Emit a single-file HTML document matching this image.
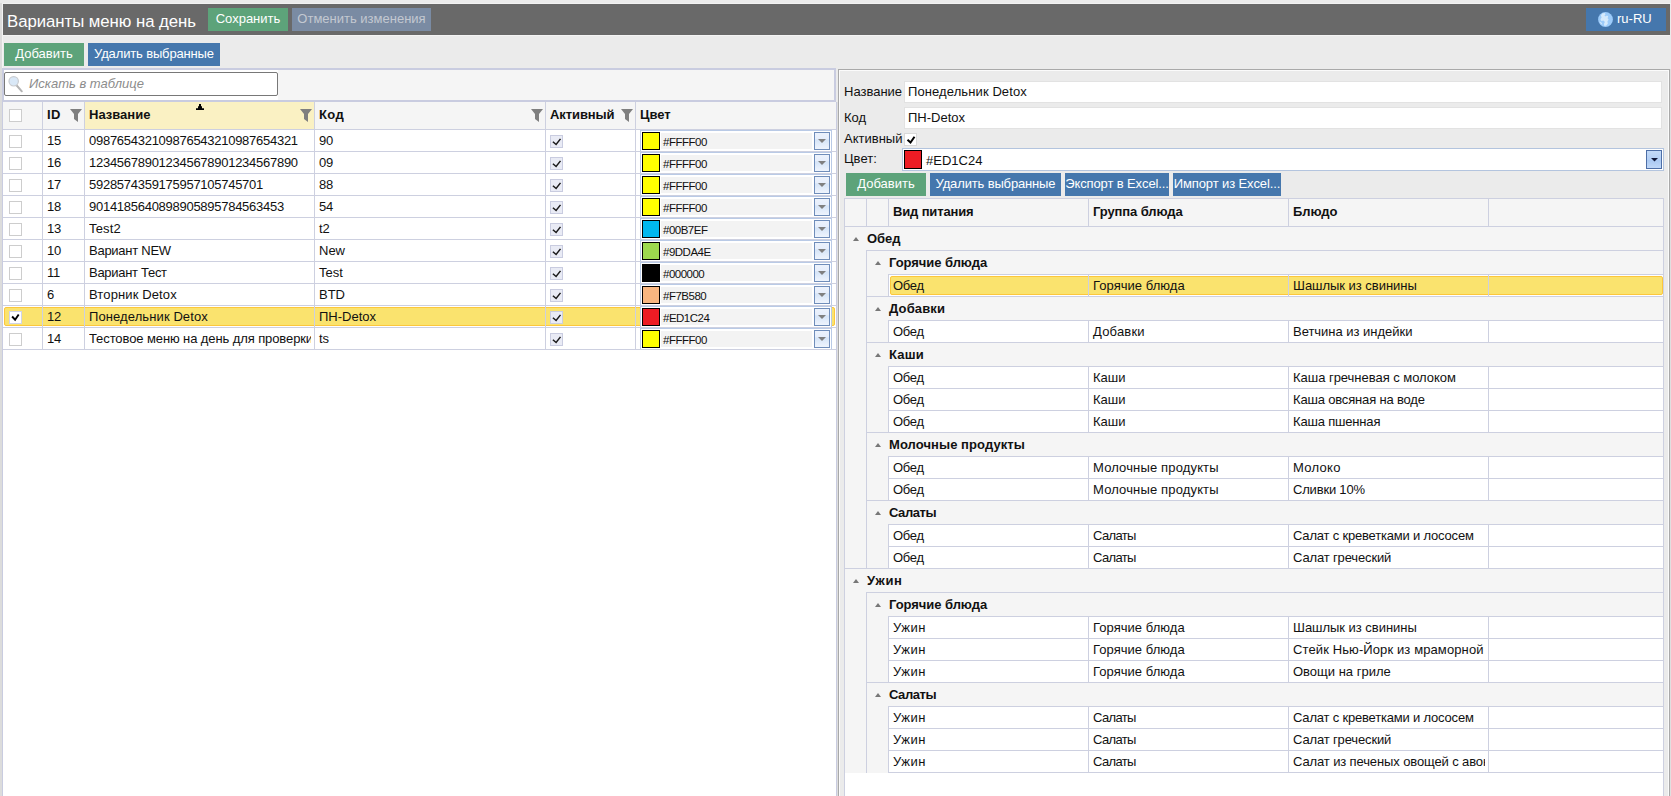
<!DOCTYPE html><html lang="ru"><head><meta charset="utf-8"><title>Варианты меню на день</title><style>
html,body{margin:0;padding:0}
body{width:1671px;height:796px;overflow:hidden;background:#ebebeb;position:relative;font-family:"Liberation Sans", sans-serif;font-size:13px;color:#111}
div{position:absolute;box-sizing:border-box}
.t{white-space:nowrap;line-height:20px;height:20px}
.b{font-weight:bold}
.btn{color:#fff;text-align:center;line-height:22px;white-space:nowrap}
.g{background:#5da37a}
.bl{background:#4577ad}
.cb{width:13px;height:13px;background:#fff;border:1px solid #cdcdcd}
.cba{width:13px;height:13px;background:#e9ebf5;border:1px solid #c9cce0}
.hl{height:1px;background:#cdd0e0}
.vl{width:1px;background:#cdd0e0}
.sw{width:18px;height:18px;border:1px solid #000}
.cmb{background:#f3f3f3}
.dd{width:16px;height:18px;border:1px solid #6f8dba;background:linear-gradient(#ecf2fc 0%,#e6eefb 40%,#d5e4f7 41%,#eef4fd 100%)}
svg{position:absolute;overflow:visible}
</style></head><body>
<div style="left:0px;top:3px;width:2px;height:793px;background:#dcdcdc"></div>
<div style="left:2px;top:3px;width:1px;height:793px;background:#f3f3f3"></div>
<div style="left:2px;top:3px;width:1669px;height:1px;background:#f2f2f2"></div>
<div style="left:3px;top:4px;width:1667px;height:31px;background:#696969"></div>
<div style="left:3px;top:35px;width:1667px;height:1px;background:#f4f4f4"></div>
<div class="t" style="left:7px;top:10px;font-size:16.8px;color:#fff;line-height:24px;height:24px;letter-spacing:-0.05px">Варианты меню на день</div>
<div class="btn g" style="left:208px;top:8px;width:80px;height:23px;">Сохранить</div>
<div class="btn" style="left:292px;top:8px;width:139px;height:23px;background:#7a8ba3;color:#c3c8d1">Отменить изменения</div>
<div class="btn bl" style="left:1586px;top:8px;width:80px;height:23px;"></div>
<svg style="left:1598px;top:12px" width="15" height="15" viewBox="0 0 15 15"><circle cx="7.5" cy="7.5" r="7.4" fill="#9ccbfa"/><path d="M4.2 1.6 L6.6 0.9 L7.6 2.2 L6.4 3.6 L7.8 4.6 L8.9 3.4 L10.2 4.2 L9.6 6.2 L10.6 7.6 L9.4 9.6 L9.9 11.6 L8.4 13.4 L6.4 13.9 L5.9 11.9 L6.9 9.9 L5.4 8.6 L3.4 8.9 L2.4 7.2 L3.6 5.4 L2.9 3.6 Z M1.6 9.4 L3.4 10.4 L4.4 12.6 L2.9 11.9 Z" fill="#d6eafc"/></svg>
<div class="t" style="left:1617px;top:9px;color:#fff">ru-RU</div>
<div class="btn g" style="left:4px;top:43px;width:80px;height:23px;">Добавить</div>
<div class="btn bl" style="left:88px;top:43px;width:132px;height:23px;letter-spacing:-0.15px">Удалить выбранные</div>
<div style="left:2px;top:68px;width:834px;height:34px;border:2px solid #c9cce0;background:#f5f5f5"></div>
<div style="left:4px;top:70px;width:274px;height:30px;background:#fff"></div>
<div style="left:4px;top:72px;width:274px;height:24px;border:1px solid #787878;border-radius:2px;background:#fff"></div>
<svg style="left:7px;top:75px" width="17" height="18" viewBox="0 0 17 18"><line x1="9.3" y1="10" x2="14.8" y2="16.3" stroke="#b4b4b4" stroke-width="2" stroke-linecap="round"/><circle cx="6.7" cy="6.3" r="4.7" fill="#d9e8f7" stroke="#c9ccd0" stroke-width="1.2"/></svg>
<div class="t" style="left:29px;top:74px;font-style:italic;color:#8c8c8c">Искать в таблице</div>
<div style="left:2px;top:102px;width:835px;height:694px;background:#fff;border-left:1px solid #c9cce0;border-right:1px solid #c9cce0"></div>
<div style="left:3px;top:102px;width:833px;height:27px;background:#f5f5f5"></div>
<div style="left:85px;top:102px;width:229px;height:27px;background:#faf1c3"></div>
<div class="cb" style="left:9px;top:109px;width:13px;height:13px;"></div>
<div class="t b" style="left:47px;top:105px;letter-spacing:0.3px;">ID</div>
<svg style="left:70px;top:109px" width="12" height="13"><polygon points="0,0 12,0 8,5 8,13 4,10 4,5" fill="#7f7f7f"/></svg>
<div class="t b" style="left:89px;top:105px;letter-spacing:0.0px;">Название</div>
<svg style="left:196px;top:104px" width="8" height="6"><polygon points="0,6 8,6 8,4.3 6,4.3 6,2.3 5,2.3 5,0 3,0 3,2.3 2,2.3 2,4.3 0,4.3" fill="#000"/></svg>
<svg style="left:300px;top:109px" width="12" height="13"><polygon points="0,0 12,0 8,5 8,13 4,10 4,5" fill="#7f7f7f"/></svg>
<div class="t b" style="left:319px;top:105px;letter-spacing:0.44px;">Код</div>
<svg style="left:531px;top:109px" width="12" height="13"><polygon points="0,0 12,0 8,5 8,13 4,10 4,5" fill="#7f7f7f"/></svg>
<div class="t b" style="left:550px;top:105px;letter-spacing:-0.09px;">Активный</div>
<svg style="left:621px;top:109px" width="12" height="13"><polygon points="0,0 12,0 8,5 8,13 4,10 4,5" fill="#7f7f7f"/></svg>
<div class="t b" style="left:640px;top:105px;letter-spacing:-0.01px;">Цвет</div>
<div class="cb" style="left:9px;top:135px;width:13px;height:13px;"></div>
<div class="t" style="left:47px;top:131px;letter-spacing:-0.27px">15</div>
<div class="t" style="left:89px;top:131px;letter-spacing:-0.27px;width:222px;overflow:hidden">098765432109876543210987654321</div>
<div class="t" style="left:319px;top:131px;letter-spacing:-0.27px">90</div>
<div class="cba" style="left:550px;top:135px;width:13px;height:13px;"><svg style="left:0;top:0" width="11" height="11" viewBox="0 0 11 11"><path d="M1.9 5.7 L5.1 8.5 L9.5 2.9" fill="none" stroke="#1a1a1a" stroke-width="1.5"/></svg></div>
<div style="left:640px;top:130px;width:192px;height:22px;border:1px solid #b9cae6;background:#fff"></div>
<div class="cmb" style="left:661px;top:133px;width:151px;height:16px;"></div>
<div class="sw" style="left:642px;top:132px;width:18px;height:18px;background:#FFFF00"></div>
<div class="t" style="left:663px;top:132px;font-size:11.5px;letter-spacing:-0.5px">#FFFF00</div>
<div class="dd" style="left:814px;top:132px;width:16px;height:18px;"><svg style="left:3px;top:6px" width="8" height="4"><polygon points="0,0 8,0 4,4" fill="#808080"/></svg></div>
<div class="hl" style="left:3px;top:151px;width:833px;height:1px;"></div>
<div class="cb" style="left:9px;top:157px;width:13px;height:13px;"></div>
<div class="t" style="left:47px;top:153px;letter-spacing:-0.27px">16</div>
<div class="t" style="left:89px;top:153px;letter-spacing:-0.27px;width:222px;overflow:hidden">123456789012345678901234567890</div>
<div class="t" style="left:319px;top:153px;letter-spacing:-0.27px">09</div>
<div class="cba" style="left:550px;top:157px;width:13px;height:13px;"><svg style="left:0;top:0" width="11" height="11" viewBox="0 0 11 11"><path d="M1.9 5.7 L5.1 8.5 L9.5 2.9" fill="none" stroke="#1a1a1a" stroke-width="1.5"/></svg></div>
<div style="left:640px;top:152px;width:192px;height:22px;border:1px solid #b9cae6;background:#fff"></div>
<div class="cmb" style="left:661px;top:155px;width:151px;height:16px;"></div>
<div class="sw" style="left:642px;top:154px;width:18px;height:18px;background:#FFFF00"></div>
<div class="t" style="left:663px;top:154px;font-size:11.5px;letter-spacing:-0.5px">#FFFF00</div>
<div class="dd" style="left:814px;top:154px;width:16px;height:18px;"><svg style="left:3px;top:6px" width="8" height="4"><polygon points="0,0 8,0 4,4" fill="#808080"/></svg></div>
<div class="hl" style="left:3px;top:173px;width:833px;height:1px;"></div>
<div class="cb" style="left:9px;top:179px;width:13px;height:13px;"></div>
<div class="t" style="left:47px;top:175px;letter-spacing:-0.27px">17</div>
<div class="t" style="left:89px;top:175px;letter-spacing:-0.27px;width:222px;overflow:hidden">5928574359175957105745701</div>
<div class="t" style="left:319px;top:175px;letter-spacing:-0.27px">88</div>
<div class="cba" style="left:550px;top:179px;width:13px;height:13px;"><svg style="left:0;top:0" width="11" height="11" viewBox="0 0 11 11"><path d="M1.9 5.7 L5.1 8.5 L9.5 2.9" fill="none" stroke="#1a1a1a" stroke-width="1.5"/></svg></div>
<div style="left:640px;top:174px;width:192px;height:22px;border:1px solid #b9cae6;background:#fff"></div>
<div class="cmb" style="left:661px;top:177px;width:151px;height:16px;"></div>
<div class="sw" style="left:642px;top:176px;width:18px;height:18px;background:#FFFF00"></div>
<div class="t" style="left:663px;top:176px;font-size:11.5px;letter-spacing:-0.5px">#FFFF00</div>
<div class="dd" style="left:814px;top:176px;width:16px;height:18px;"><svg style="left:3px;top:6px" width="8" height="4"><polygon points="0,0 8,0 4,4" fill="#808080"/></svg></div>
<div class="hl" style="left:3px;top:195px;width:833px;height:1px;"></div>
<div class="cb" style="left:9px;top:201px;width:13px;height:13px;"></div>
<div class="t" style="left:47px;top:197px;letter-spacing:-0.27px">18</div>
<div class="t" style="left:89px;top:197px;letter-spacing:-0.27px;width:222px;overflow:hidden">9014185640898905895784563453</div>
<div class="t" style="left:319px;top:197px;letter-spacing:-0.27px">54</div>
<div class="cba" style="left:550px;top:201px;width:13px;height:13px;"><svg style="left:0;top:0" width="11" height="11" viewBox="0 0 11 11"><path d="M1.9 5.7 L5.1 8.5 L9.5 2.9" fill="none" stroke="#1a1a1a" stroke-width="1.5"/></svg></div>
<div style="left:640px;top:196px;width:192px;height:22px;border:1px solid #b9cae6;background:#fff"></div>
<div class="cmb" style="left:661px;top:199px;width:151px;height:16px;"></div>
<div class="sw" style="left:642px;top:198px;width:18px;height:18px;background:#FFFF00"></div>
<div class="t" style="left:663px;top:198px;font-size:11.5px;letter-spacing:-0.5px">#FFFF00</div>
<div class="dd" style="left:814px;top:198px;width:16px;height:18px;"><svg style="left:3px;top:6px" width="8" height="4"><polygon points="0,0 8,0 4,4" fill="#808080"/></svg></div>
<div class="hl" style="left:3px;top:217px;width:833px;height:1px;"></div>
<div class="cb" style="left:9px;top:223px;width:13px;height:13px;"></div>
<div class="t" style="left:47px;top:219px;letter-spacing:-0.27px">13</div>
<div class="t" style="left:89px;top:219px;letter-spacing:0.14px;;width:222px;overflow:hidden">Test2</div>
<div class="t" style="left:319px;top:219px;">t2</div>
<div class="cba" style="left:550px;top:223px;width:13px;height:13px;"><svg style="left:0;top:0" width="11" height="11" viewBox="0 0 11 11"><path d="M1.9 5.7 L5.1 8.5 L9.5 2.9" fill="none" stroke="#1a1a1a" stroke-width="1.5"/></svg></div>
<div style="left:640px;top:218px;width:192px;height:22px;border:1px solid #b9cae6;background:#fff"></div>
<div class="cmb" style="left:661px;top:221px;width:151px;height:16px;"></div>
<div class="sw" style="left:642px;top:220px;width:18px;height:18px;background:#00B7EF"></div>
<div class="t" style="left:663px;top:220px;font-size:11.5px;letter-spacing:-0.5px">#00B7EF</div>
<div class="dd" style="left:814px;top:220px;width:16px;height:18px;"><svg style="left:3px;top:6px" width="8" height="4"><polygon points="0,0 8,0 4,4" fill="#808080"/></svg></div>
<div class="hl" style="left:3px;top:239px;width:833px;height:1px;"></div>
<div class="cb" style="left:9px;top:245px;width:13px;height:13px;"></div>
<div class="t" style="left:47px;top:241px;letter-spacing:-0.27px">10</div>
<div class="t" style="left:89px;top:241px;letter-spacing:-0.26px;;width:222px;overflow:hidden">Вариант NEW</div>
<div class="t" style="left:319px;top:241px;">New</div>
<div class="cba" style="left:550px;top:245px;width:13px;height:13px;"><svg style="left:0;top:0" width="11" height="11" viewBox="0 0 11 11"><path d="M1.9 5.7 L5.1 8.5 L9.5 2.9" fill="none" stroke="#1a1a1a" stroke-width="1.5"/></svg></div>
<div style="left:640px;top:240px;width:192px;height:22px;border:1px solid #b9cae6;background:#fff"></div>
<div class="cmb" style="left:661px;top:243px;width:151px;height:16px;"></div>
<div class="sw" style="left:642px;top:242px;width:18px;height:18px;background:#9DDA4E"></div>
<div class="t" style="left:663px;top:242px;font-size:11.5px;letter-spacing:-0.5px">#9DDA4E</div>
<div class="dd" style="left:814px;top:242px;width:16px;height:18px;"><svg style="left:3px;top:6px" width="8" height="4"><polygon points="0,0 8,0 4,4" fill="#808080"/></svg></div>
<div class="hl" style="left:3px;top:261px;width:833px;height:1px;"></div>
<div class="cb" style="left:9px;top:267px;width:13px;height:13px;"></div>
<div class="t" style="left:47px;top:263px;letter-spacing:-0.27px">11</div>
<div class="t" style="left:89px;top:263px;letter-spacing:-0.29px;;width:222px;overflow:hidden">Вариант Тест</div>
<div class="t" style="left:319px;top:263px;">Test</div>
<div class="cba" style="left:550px;top:267px;width:13px;height:13px;"><svg style="left:0;top:0" width="11" height="11" viewBox="0 0 11 11"><path d="M1.9 5.7 L5.1 8.5 L9.5 2.9" fill="none" stroke="#1a1a1a" stroke-width="1.5"/></svg></div>
<div style="left:640px;top:262px;width:192px;height:22px;border:1px solid #b9cae6;background:#fff"></div>
<div class="cmb" style="left:661px;top:265px;width:151px;height:16px;"></div>
<div class="sw" style="left:642px;top:264px;width:18px;height:18px;background:#000000"></div>
<div class="t" style="left:663px;top:264px;font-size:11.5px;letter-spacing:-0.5px">#000000</div>
<div class="dd" style="left:814px;top:264px;width:16px;height:18px;"><svg style="left:3px;top:6px" width="8" height="4"><polygon points="0,0 8,0 4,4" fill="#808080"/></svg></div>
<div class="hl" style="left:3px;top:283px;width:833px;height:1px;"></div>
<div class="cb" style="left:9px;top:289px;width:13px;height:13px;"></div>
<div class="t" style="left:47px;top:285px;letter-spacing:-0.27px">6</div>
<div class="t" style="left:89px;top:285px;letter-spacing:0.12px;;width:222px;overflow:hidden">Вторник Detox</div>
<div class="t" style="left:319px;top:285px;">BTD</div>
<div class="cba" style="left:550px;top:289px;width:13px;height:13px;"><svg style="left:0;top:0" width="11" height="11" viewBox="0 0 11 11"><path d="M1.9 5.7 L5.1 8.5 L9.5 2.9" fill="none" stroke="#1a1a1a" stroke-width="1.5"/></svg></div>
<div style="left:640px;top:284px;width:192px;height:22px;border:1px solid #b9cae6;background:#fff"></div>
<div class="cmb" style="left:661px;top:287px;width:151px;height:16px;"></div>
<div class="sw" style="left:642px;top:286px;width:18px;height:18px;background:#F7B580"></div>
<div class="t" style="left:663px;top:286px;font-size:11.5px;letter-spacing:-0.5px">#F7B580</div>
<div class="dd" style="left:814px;top:286px;width:16px;height:18px;"><svg style="left:3px;top:6px" width="8" height="4"><polygon points="0,0 8,0 4,4" fill="#808080"/></svg></div>
<div class="hl" style="left:3px;top:305px;width:833px;height:1px;"></div>
<div style="left:4px;top:307px;width:831px;height:19px;background:#fae36e;border:1px solid #fcc73c;border-radius:2px"></div>
<div class="cb" style="left:9px;top:311px;width:13px;height:13px;border-color:#d0d3e8"><svg style="left:0;top:0" width="11" height="11" viewBox="0 0 11 11"><path d="M2.1 4.5 L5.1 7.7 L8.7 2.5" fill="none" stroke="#000" stroke-width="1.9"/></svg></div>
<div class="t" style="left:47px;top:307px;letter-spacing:-0.27px">12</div>
<div class="t" style="left:89px;top:307px;letter-spacing:0.1px;;width:222px;overflow:hidden">Понедельник Detox</div>
<div class="t" style="left:319px;top:307px;">ПН-Detox</div>
<div class="cba" style="left:550px;top:311px;width:13px;height:13px;"><svg style="left:0;top:0" width="11" height="11" viewBox="0 0 11 11"><path d="M1.9 5.7 L5.1 8.5 L9.5 2.9" fill="none" stroke="#1a1a1a" stroke-width="1.5"/></svg></div>
<div style="left:640px;top:306px;width:192px;height:22px;border:1px solid #b9cae6;background:#fff"></div>
<div class="cmb" style="left:661px;top:309px;width:151px;height:16px;"></div>
<div class="sw" style="left:642px;top:308px;width:18px;height:18px;background:#ED1C24"></div>
<div class="t" style="left:663px;top:308px;font-size:11.5px;letter-spacing:-0.5px">#ED1C24</div>
<div class="dd" style="left:814px;top:308px;width:16px;height:18px;"><svg style="left:3px;top:6px" width="8" height="4"><polygon points="0,0 8,0 4,4" fill="#808080"/></svg></div>
<div class="hl" style="left:3px;top:327px;width:833px;height:1px;"></div>
<div class="cb" style="left:9px;top:333px;width:13px;height:13px;"></div>
<div class="t" style="left:47px;top:329px;letter-spacing:-0.27px">14</div>
<div class="t" style="left:89px;top:329px;letter-spacing:-0.1px;;width:222px;overflow:hidden">Тестовое меню на день для проверки</div>
<div class="t" style="left:319px;top:329px;">ts</div>
<div class="cba" style="left:550px;top:333px;width:13px;height:13px;"><svg style="left:0;top:0" width="11" height="11" viewBox="0 0 11 11"><path d="M1.9 5.7 L5.1 8.5 L9.5 2.9" fill="none" stroke="#1a1a1a" stroke-width="1.5"/></svg></div>
<div style="left:640px;top:328px;width:192px;height:22px;border:1px solid #b9cae6;background:#fff"></div>
<div class="cmb" style="left:661px;top:331px;width:151px;height:16px;"></div>
<div class="sw" style="left:642px;top:330px;width:18px;height:18px;background:#FFFF00"></div>
<div class="t" style="left:663px;top:330px;font-size:11.5px;letter-spacing:-0.5px">#FFFF00</div>
<div class="dd" style="left:814px;top:330px;width:16px;height:18px;"><svg style="left:3px;top:6px" width="8" height="4"><polygon points="0,0 8,0 4,4" fill="#808080"/></svg></div>
<div class="hl" style="left:3px;top:349px;width:833px;height:1px;"></div>
<div class="hl" style="left:3px;top:129px;width:833px;height:1px;"></div>
<div class="vl" style="left:42px;top:102px;width:1px;height:248px;"></div>
<div class="vl" style="left:84px;top:102px;width:1px;height:248px;"></div>
<div class="vl" style="left:314px;top:102px;width:1px;height:248px;"></div>
<div class="vl" style="left:545px;top:102px;width:1px;height:248px;"></div>
<div class="vl" style="left:635px;top:102px;width:1px;height:248px;"></div>
<div style="left:2px;top:100px;width:834px;height:2px;background:#c9cce0"></div>
<div style="left:838px;top:69px;width:832px;height:731px;border:1px solid #a9a9a9"></div>
<div style="left:839px;top:70px;width:830px;height:730px;border-left:1px solid #fbfbfb;border-top:1px solid #fbfbfb"></div>
<div style="left:837px;top:102px;width:1px;height:694px;background:#dedede"></div>
<div class="t" style="left:844px;top:82px;">Название</div>
<div class="t" style="left:844px;top:108px;">Код</div>
<div class="t" style="left:844px;top:129px;">Активный</div>
<div class="t" style="left:844px;top:149px;">Цвет:</div>
<div style="left:904px;top:81px;width:758px;height:22px;background:#fff;border:1px solid #e2e2e2"></div>
<div style="left:904px;top:107px;width:758px;height:22px;background:#fff;border:1px solid #e2e2e2"></div>
<div class="t" style="left:908px;top:82px;letter-spacing:0.1px;">Понедельник Detox</div>
<div class="t" style="left:908px;top:108px;">ПН-Detox</div>
<div style="left:904px;top:133px;width:13px;height:13px;background:#fff;border:1px solid #d9d9d9"><svg style="left:0;top:0" width="11" height="11" viewBox="0 0 11 11"><path d="M2.5 5.7 L5.5 8.5 L9.5 2.7" fill="none" stroke="#000" stroke-width="2"/></svg></div>
<div style="left:902px;top:148px;width:762px;height:23px;background:#fff;border:1px solid #b3c4de"></div>
<div style="left:904px;top:150px;width:18px;height:19px;background:#ed1c24;border:1px solid #000"></div>
<div class="t" style="left:926px;top:151px;">#ED1C24</div>
<div style="left:1646px;top:150px;width:16px;height:19px;border:1px solid #4d6ea6;background:linear-gradient(#c3daf8,#b3cff5 50%,#a9c8f2 51%,#c0d8f8)"><svg style="left:4px;top:7px" width="7" height="4"><polygon points="0,0 7,0 3.5,3.5" fill="#10183a"/></svg></div>
<div class="btn g" style="left:846px;top:173px;width:80px;height:23px;">Добавить</div>
<div class="btn bl" style="left:930px;top:173px;width:131px;height:23px;letter-spacing:-0.15px">Удалить выбранные</div>
<div class="btn bl" style="left:1065px;top:173px;width:104px;height:23px;letter-spacing:-0.11px">Экспорт в Excel...</div>
<div class="btn bl" style="left:1173px;top:173px;width:108px;height:23px;letter-spacing:-0.11px">Импорт из Excel...</div>
<div style="left:844px;top:198px;width:820px;height:602px;background:#fff;border:1px solid #cdd0e0"></div>
<div style="left:1668px;top:70px;width:1px;height:726px;background:#fbfbfb"></div>
<div style="left:1670px;top:69px;width:1px;height:727px;background:#dfdfdf"></div>
<div style="left:845px;top:199px;width:818px;height:27px;background:#f5f5f5"></div>
<div class="vl" style="left:866px;top:199px;width:1px;height:27px;"></div>
<div class="vl" style="left:888px;top:199px;width:1px;height:27px;"></div>
<div class="vl" style="left:1088px;top:199px;width:1px;height:27px;"></div>
<div class="vl" style="left:1288px;top:199px;width:1px;height:27px;"></div>
<div class="vl" style="left:1488px;top:199px;width:1px;height:27px;"></div>
<div class="hl" style="left:845px;top:226px;width:818px;height:1px;"></div>
<div class="t b" style="left:893px;top:202px;letter-spacing:-0.15px;">Вид питания</div>
<div class="t b" style="left:1093px;top:202px;letter-spacing:-0.1px;">Группа блюда</div>
<div class="t b" style="left:1293px;top:202px;letter-spacing:-0.09px;">Блюдо</div>
<div style="left:845px;top:227px;width:43px;height:545px;background:#f5f5f5"></div>
<div style="left:845px;top:227px;width:818px;height:23px;background:#f5f5f5"></div>
<svg style="left:853px;top:237px" width="6" height="4"><polygon points="0,4 6,4 3,0" fill="#777"/></svg>
<div class="t b" style="left:867px;top:229px;letter-spacing:-0.08px;">Обед</div>
<div class="hl" style="left:866px;top:250px;width:797px;height:1px;"></div>
<div style="left:845px;top:251px;width:818px;height:23px;background:#f5f5f5"></div>
<div class="vl" style="left:866px;top:251px;width:1px;height:24px;"></div>
<svg style="left:875px;top:261px" width="6" height="4"><polygon points="0,4 6,4 3,0" fill="#777"/></svg>
<div class="t b" style="left:889px;top:253px;letter-spacing:-0.05px;">Горячие блюда</div>
<div class="hl" style="left:888px;top:274px;width:775px;height:1px;"></div>
<div style="left:845px;top:275px;width:43px;height:22px;background:#f5f5f5"></div>
<div class="vl" style="left:866px;top:275px;width:1px;height:22px;"></div>
<div style="left:890px;top:276px;width:773px;height:19px;background:#fae36e;border:1px solid #fcc73c;border-radius:2px"></div>
<div class="vl" style="left:888px;top:275px;width:1px;height:21px;"></div>
<div class="vl" style="left:1088px;top:275px;width:1px;height:21px;"></div>
<div class="vl" style="left:1288px;top:275px;width:1px;height:21px;"></div>
<div class="vl" style="left:1488px;top:275px;width:1px;height:21px;"></div>
<div class="t" style="left:893px;top:276px;letter-spacing:-0.29px;">Обед</div>
<div class="t" style="left:1093px;top:276px;letter-spacing:0.05px;">Горячие блюда</div>
<div class="t" style="left:1293px;top:276px;letter-spacing:-0.03px;width:192px;overflow:hidden">Шашлык из свинины</div>
<div class="hl" style="left:866px;top:296px;width:797px;height:1px;"></div>
<div style="left:845px;top:297px;width:818px;height:23px;background:#f5f5f5"></div>
<div class="vl" style="left:866px;top:297px;width:1px;height:24px;"></div>
<svg style="left:875px;top:307px" width="6" height="4"><polygon points="0,4 6,4 3,0" fill="#777"/></svg>
<div class="t b" style="left:889px;top:299px;letter-spacing:0.15px;">Добавки</div>
<div class="hl" style="left:888px;top:320px;width:775px;height:1px;"></div>
<div style="left:845px;top:321px;width:43px;height:22px;background:#f5f5f5"></div>
<div class="vl" style="left:866px;top:321px;width:1px;height:22px;"></div>
<div class="vl" style="left:888px;top:321px;width:1px;height:21px;"></div>
<div class="vl" style="left:1088px;top:321px;width:1px;height:21px;"></div>
<div class="vl" style="left:1288px;top:321px;width:1px;height:21px;"></div>
<div class="vl" style="left:1488px;top:321px;width:1px;height:21px;"></div>
<div class="t" style="left:893px;top:322px;letter-spacing:-0.29px;">Обед</div>
<div class="t" style="left:1093px;top:322px;letter-spacing:0.2px;">Добавки</div>
<div class="t" style="left:1293px;top:322px;letter-spacing:-0.02px;width:192px;overflow:hidden">Ветчина из индейки</div>
<div class="hl" style="left:866px;top:342px;width:797px;height:1px;"></div>
<div style="left:845px;top:343px;width:818px;height:23px;background:#f5f5f5"></div>
<div class="vl" style="left:866px;top:343px;width:1px;height:24px;"></div>
<svg style="left:875px;top:353px" width="6" height="4"><polygon points="0,4 6,4 3,0" fill="#777"/></svg>
<div class="t b" style="left:889px;top:345px;letter-spacing:0.16px;">Каши</div>
<div class="hl" style="left:888px;top:366px;width:775px;height:1px;"></div>
<div style="left:845px;top:367px;width:43px;height:22px;background:#f5f5f5"></div>
<div class="vl" style="left:866px;top:367px;width:1px;height:22px;"></div>
<div class="vl" style="left:888px;top:367px;width:1px;height:21px;"></div>
<div class="vl" style="left:1088px;top:367px;width:1px;height:21px;"></div>
<div class="vl" style="left:1288px;top:367px;width:1px;height:21px;"></div>
<div class="vl" style="left:1488px;top:367px;width:1px;height:21px;"></div>
<div class="t" style="left:893px;top:368px;letter-spacing:-0.29px;">Обед</div>
<div class="t" style="left:1093px;top:368px;">Каши</div>
<div class="t" style="left:1293px;top:368px;letter-spacing:-0.03px;width:192px;overflow:hidden">Каша гречневая с молоком</div>
<div class="hl" style="left:888px;top:388px;width:775px;height:1px;"></div>
<div style="left:845px;top:389px;width:43px;height:22px;background:#f5f5f5"></div>
<div class="vl" style="left:866px;top:389px;width:1px;height:22px;"></div>
<div class="vl" style="left:888px;top:389px;width:1px;height:21px;"></div>
<div class="vl" style="left:1088px;top:389px;width:1px;height:21px;"></div>
<div class="vl" style="left:1288px;top:389px;width:1px;height:21px;"></div>
<div class="vl" style="left:1488px;top:389px;width:1px;height:21px;"></div>
<div class="t" style="left:893px;top:390px;letter-spacing:-0.29px;">Обед</div>
<div class="t" style="left:1093px;top:390px;">Каши</div>
<div class="t" style="left:1293px;top:390px;letter-spacing:-0.17px;width:192px;overflow:hidden">Каша овсяная на воде</div>
<div class="hl" style="left:888px;top:410px;width:775px;height:1px;"></div>
<div style="left:845px;top:411px;width:43px;height:22px;background:#f5f5f5"></div>
<div class="vl" style="left:866px;top:411px;width:1px;height:22px;"></div>
<div class="vl" style="left:888px;top:411px;width:1px;height:21px;"></div>
<div class="vl" style="left:1088px;top:411px;width:1px;height:21px;"></div>
<div class="vl" style="left:1288px;top:411px;width:1px;height:21px;"></div>
<div class="vl" style="left:1488px;top:411px;width:1px;height:21px;"></div>
<div class="t" style="left:893px;top:412px;letter-spacing:-0.29px;">Обед</div>
<div class="t" style="left:1093px;top:412px;">Каши</div>
<div class="t" style="left:1293px;top:412px;letter-spacing:-0.18px;width:192px;overflow:hidden">Каша пшенная</div>
<div class="hl" style="left:866px;top:432px;width:797px;height:1px;"></div>
<div style="left:845px;top:433px;width:818px;height:23px;background:#f5f5f5"></div>
<div class="vl" style="left:866px;top:433px;width:1px;height:24px;"></div>
<svg style="left:875px;top:443px" width="6" height="4"><polygon points="0,4 6,4 3,0" fill="#777"/></svg>
<div class="t b" style="left:889px;top:435px;letter-spacing:0.07px;">Молочные продукты</div>
<div class="hl" style="left:888px;top:456px;width:775px;height:1px;"></div>
<div style="left:845px;top:457px;width:43px;height:22px;background:#f5f5f5"></div>
<div class="vl" style="left:866px;top:457px;width:1px;height:22px;"></div>
<div class="vl" style="left:888px;top:457px;width:1px;height:21px;"></div>
<div class="vl" style="left:1088px;top:457px;width:1px;height:21px;"></div>
<div class="vl" style="left:1288px;top:457px;width:1px;height:21px;"></div>
<div class="vl" style="left:1488px;top:457px;width:1px;height:21px;"></div>
<div class="t" style="left:893px;top:458px;letter-spacing:-0.29px;">Обед</div>
<div class="t" style="left:1093px;top:458px;letter-spacing:0.15px;">Молочные продукты</div>
<div class="t" style="left:1293px;top:458px;letter-spacing:0.31px;width:192px;overflow:hidden">Молоко</div>
<div class="hl" style="left:888px;top:478px;width:775px;height:1px;"></div>
<div style="left:845px;top:479px;width:43px;height:22px;background:#f5f5f5"></div>
<div class="vl" style="left:866px;top:479px;width:1px;height:22px;"></div>
<div class="vl" style="left:888px;top:479px;width:1px;height:21px;"></div>
<div class="vl" style="left:1088px;top:479px;width:1px;height:21px;"></div>
<div class="vl" style="left:1288px;top:479px;width:1px;height:21px;"></div>
<div class="vl" style="left:1488px;top:479px;width:1px;height:21px;"></div>
<div class="t" style="left:893px;top:480px;letter-spacing:-0.29px;">Обед</div>
<div class="t" style="left:1093px;top:480px;letter-spacing:0.15px;">Молочные продукты</div>
<div class="t" style="left:1293px;top:480px;letter-spacing:-0.19px;width:192px;overflow:hidden">Сливки 10%</div>
<div class="hl" style="left:866px;top:500px;width:797px;height:1px;"></div>
<div style="left:845px;top:501px;width:818px;height:23px;background:#f5f5f5"></div>
<div class="vl" style="left:866px;top:501px;width:1px;height:24px;"></div>
<svg style="left:875px;top:511px" width="6" height="4"><polygon points="0,4 6,4 3,0" fill="#777"/></svg>
<div class="t b" style="left:889px;top:503px;letter-spacing:-0.44px;">Салаты</div>
<div class="hl" style="left:888px;top:524px;width:775px;height:1px;"></div>
<div style="left:845px;top:525px;width:43px;height:22px;background:#f5f5f5"></div>
<div class="vl" style="left:866px;top:525px;width:1px;height:22px;"></div>
<div class="vl" style="left:888px;top:525px;width:1px;height:21px;"></div>
<div class="vl" style="left:1088px;top:525px;width:1px;height:21px;"></div>
<div class="vl" style="left:1288px;top:525px;width:1px;height:21px;"></div>
<div class="vl" style="left:1488px;top:525px;width:1px;height:21px;"></div>
<div class="t" style="left:893px;top:526px;letter-spacing:-0.29px;">Обед</div>
<div class="t" style="left:1093px;top:526px;letter-spacing:-0.63px;">Салаты</div>
<div class="t" style="left:1293px;top:526px;letter-spacing:-0.19px;width:192px;overflow:hidden">Салат с креветками и лососем</div>
<div class="hl" style="left:888px;top:546px;width:775px;height:1px;"></div>
<div style="left:845px;top:547px;width:43px;height:22px;background:#f5f5f5"></div>
<div class="vl" style="left:866px;top:547px;width:1px;height:22px;"></div>
<div class="vl" style="left:888px;top:547px;width:1px;height:21px;"></div>
<div class="vl" style="left:1088px;top:547px;width:1px;height:21px;"></div>
<div class="vl" style="left:1288px;top:547px;width:1px;height:21px;"></div>
<div class="vl" style="left:1488px;top:547px;width:1px;height:21px;"></div>
<div class="t" style="left:893px;top:548px;letter-spacing:-0.29px;">Обед</div>
<div class="t" style="left:1093px;top:548px;letter-spacing:-0.63px;">Салаты</div>
<div class="t" style="left:1293px;top:548px;letter-spacing:-0.14px;width:192px;overflow:hidden">Салат греческий</div>
<div class="hl" style="left:845px;top:568px;width:818px;height:1px;"></div>
<div style="left:845px;top:569px;width:818px;height:23px;background:#f5f5f5"></div>
<svg style="left:853px;top:579px" width="6" height="4"><polygon points="0,4 6,4 3,0" fill="#777"/></svg>
<div class="t b" style="left:867px;top:571px;letter-spacing:0.63px;">Ужин</div>
<div class="hl" style="left:866px;top:592px;width:797px;height:1px;"></div>
<div style="left:845px;top:593px;width:818px;height:23px;background:#f5f5f5"></div>
<div class="vl" style="left:866px;top:593px;width:1px;height:24px;"></div>
<svg style="left:875px;top:603px" width="6" height="4"><polygon points="0,4 6,4 3,0" fill="#777"/></svg>
<div class="t b" style="left:889px;top:595px;letter-spacing:-0.05px;">Горячие блюда</div>
<div class="hl" style="left:888px;top:616px;width:775px;height:1px;"></div>
<div style="left:845px;top:617px;width:43px;height:22px;background:#f5f5f5"></div>
<div class="vl" style="left:866px;top:617px;width:1px;height:22px;"></div>
<div class="vl" style="left:888px;top:617px;width:1px;height:21px;"></div>
<div class="vl" style="left:1088px;top:617px;width:1px;height:21px;"></div>
<div class="vl" style="left:1288px;top:617px;width:1px;height:21px;"></div>
<div class="vl" style="left:1488px;top:617px;width:1px;height:21px;"></div>
<div class="t" style="left:893px;top:618px;letter-spacing:0.46px;">Ужин</div>
<div class="t" style="left:1093px;top:618px;letter-spacing:0.05px;">Горячие блюда</div>
<div class="t" style="left:1293px;top:618px;letter-spacing:-0.03px;width:192px;overflow:hidden">Шашлык из свинины</div>
<div class="hl" style="left:888px;top:638px;width:775px;height:1px;"></div>
<div style="left:845px;top:639px;width:43px;height:22px;background:#f5f5f5"></div>
<div class="vl" style="left:866px;top:639px;width:1px;height:22px;"></div>
<div class="vl" style="left:888px;top:639px;width:1px;height:21px;"></div>
<div class="vl" style="left:1088px;top:639px;width:1px;height:21px;"></div>
<div class="vl" style="left:1288px;top:639px;width:1px;height:21px;"></div>
<div class="vl" style="left:1488px;top:639px;width:1px;height:21px;"></div>
<div class="t" style="left:893px;top:640px;letter-spacing:0.46px;">Ужин</div>
<div class="t" style="left:1093px;top:640px;letter-spacing:0.05px;">Горячие блюда</div>
<div class="t" style="left:1293px;top:640px;letter-spacing:0.11px;width:192px;overflow:hidden">Стейк Нью-Йорк из мраморной говядины</div>
<div class="hl" style="left:888px;top:660px;width:775px;height:1px;"></div>
<div style="left:845px;top:661px;width:43px;height:22px;background:#f5f5f5"></div>
<div class="vl" style="left:866px;top:661px;width:1px;height:22px;"></div>
<div class="vl" style="left:888px;top:661px;width:1px;height:21px;"></div>
<div class="vl" style="left:1088px;top:661px;width:1px;height:21px;"></div>
<div class="vl" style="left:1288px;top:661px;width:1px;height:21px;"></div>
<div class="vl" style="left:1488px;top:661px;width:1px;height:21px;"></div>
<div class="t" style="left:893px;top:662px;letter-spacing:0.46px;">Ужин</div>
<div class="t" style="left:1093px;top:662px;letter-spacing:0.05px;">Горячие блюда</div>
<div class="t" style="left:1293px;top:662px;width:192px;overflow:hidden">Овощи на гриле</div>
<div class="hl" style="left:866px;top:682px;width:797px;height:1px;"></div>
<div style="left:845px;top:683px;width:818px;height:23px;background:#f5f5f5"></div>
<div class="vl" style="left:866px;top:683px;width:1px;height:24px;"></div>
<svg style="left:875px;top:693px" width="6" height="4"><polygon points="0,4 6,4 3,0" fill="#777"/></svg>
<div class="t b" style="left:889px;top:685px;letter-spacing:-0.44px;">Салаты</div>
<div class="hl" style="left:888px;top:706px;width:775px;height:1px;"></div>
<div style="left:845px;top:707px;width:43px;height:22px;background:#f5f5f5"></div>
<div class="vl" style="left:866px;top:707px;width:1px;height:22px;"></div>
<div class="vl" style="left:888px;top:707px;width:1px;height:21px;"></div>
<div class="vl" style="left:1088px;top:707px;width:1px;height:21px;"></div>
<div class="vl" style="left:1288px;top:707px;width:1px;height:21px;"></div>
<div class="vl" style="left:1488px;top:707px;width:1px;height:21px;"></div>
<div class="t" style="left:893px;top:708px;letter-spacing:0.46px;">Ужин</div>
<div class="t" style="left:1093px;top:708px;letter-spacing:-0.63px;">Салаты</div>
<div class="t" style="left:1293px;top:708px;letter-spacing:-0.19px;width:192px;overflow:hidden">Салат с креветками и лососем</div>
<div class="hl" style="left:888px;top:728px;width:775px;height:1px;"></div>
<div style="left:845px;top:729px;width:43px;height:22px;background:#f5f5f5"></div>
<div class="vl" style="left:866px;top:729px;width:1px;height:22px;"></div>
<div class="vl" style="left:888px;top:729px;width:1px;height:21px;"></div>
<div class="vl" style="left:1088px;top:729px;width:1px;height:21px;"></div>
<div class="vl" style="left:1288px;top:729px;width:1px;height:21px;"></div>
<div class="vl" style="left:1488px;top:729px;width:1px;height:21px;"></div>
<div class="t" style="left:893px;top:730px;letter-spacing:0.46px;">Ужин</div>
<div class="t" style="left:1093px;top:730px;letter-spacing:-0.63px;">Салаты</div>
<div class="t" style="left:1293px;top:730px;letter-spacing:-0.14px;width:192px;overflow:hidden">Салат греческий</div>
<div class="hl" style="left:888px;top:750px;width:775px;height:1px;"></div>
<div style="left:845px;top:751px;width:43px;height:22px;background:#f5f5f5"></div>
<div class="vl" style="left:866px;top:751px;width:1px;height:22px;"></div>
<div class="vl" style="left:888px;top:751px;width:1px;height:21px;"></div>
<div class="vl" style="left:1088px;top:751px;width:1px;height:21px;"></div>
<div class="vl" style="left:1288px;top:751px;width:1px;height:21px;"></div>
<div class="vl" style="left:1488px;top:751px;width:1px;height:21px;"></div>
<div class="t" style="left:893px;top:752px;letter-spacing:0.46px;">Ужин</div>
<div class="t" style="left:1093px;top:752px;letter-spacing:-0.63px;">Салаты</div>
<div class="t" style="left:1293px;top:752px;letter-spacing:-0.12px;width:192px;overflow:hidden">Салат из печеных овощей с авокадо</div>
<div class="hl" style="left:888px;top:772px;width:775px;height:1px;"></div>
</body></html>
